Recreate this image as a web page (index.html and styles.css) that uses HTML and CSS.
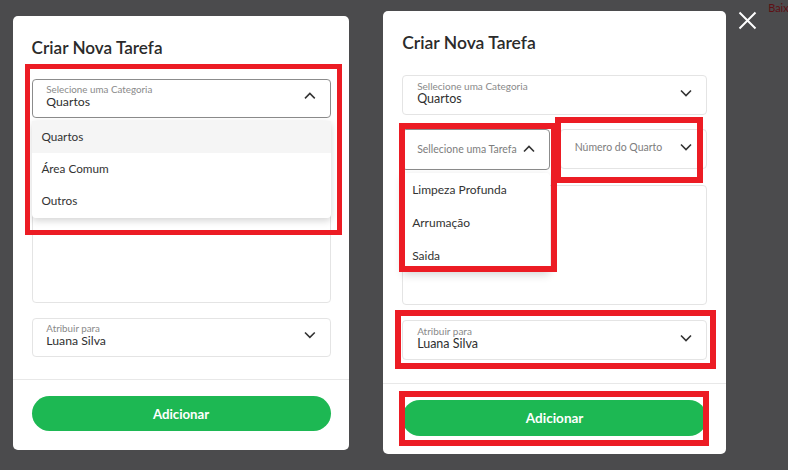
FILE: index.html
```html
<!DOCTYPE html>
<html>
<head>
<meta charset="utf-8">
<link rel="stylesheet" href="styles.css">
</head>
<body>
<div class="canvas">

  <section class="modal modal-small">
    <h2 class="modal-title">Criar Nova Tarefa</h2>
    <div class="form">
      <div class="field">
        <div class="select is-focused">
          <div class="select-text">
            <span class="select-label">Selecione uma Categoria</span>
            <span class="select-value">Quartos</span>
          </div>
          <svg class="chevron" viewBox="0 0 12 8"><path d="M1 6.5l5-5 5 5"/></svg>
        </div>
        <ul class="menu">
          <li class="menu-item is-hover">Quartos</li>
          <li class="menu-item">Área Comum</li>
          <li class="menu-item">Outros</li>
        </ul>
      </div>
      <div class="row">
        <div class="select">
          <span class="select-placeholder">Selecione uma Tarefa</span>
          <svg class="chevron" viewBox="0 0 12 8"><path d="M1 1.5l5 5 5-5"/></svg>
        </div>
        <div class="select">
          <span class="select-placeholder">Número do Quarto</span>
          <svg class="chevron" viewBox="0 0 12 8"><path d="M1 1.5l5 5 5-5"/></svg>
        </div>
      </div>
      <div class="textarea"></div>
      <div class="select">
        <div class="select-text">
          <span class="select-label">Atribuir para</span>
          <span class="select-value">Luana Silva</span>
        </div>
        <svg class="chevron" viewBox="0 0 12 8"><path d="M1 1.5l5 5 5-5"/></svg>
      </div>
    </div>
    <div class="modal-footer">
      <button class="btn">Adicionar</button>
    </div>
    <div class="mark mark-category"></div>
  </section>

  <section class="modal">
    <h2 class="modal-title">Criar Nova Tarefa</h2>
    <div class="form">
      <div class="select">
        <div class="select-text">
          <span class="select-label">Sellecione uma Categoria</span>
          <span class="select-value">Quartos</span>
        </div>
        <svg class="chevron" viewBox="0 0 12 8"><path d="M1 1.5l5 5 5-5"/></svg>
      </div>
      <div class="row">
        <div class="field">
          <div class="select select-small is-focused">
            <span class="select-placeholder">Sellecione uma Tarefa</span>
            <svg class="chevron" viewBox="0 0 12 8"><path d="M1 6.5l5-5 5 5"/></svg>
          </div>
          <ul class="menu">
            <li class="menu-item">Limpeza Profunda</li>
            <li class="menu-item">Arrumação</li>
            <li class="menu-item">Saida</li>
          </ul>
        </div>
        <div class="select">
          <span class="select-placeholder">Número do Quarto</span>
          <svg class="chevron" viewBox="0 0 12 8"><path d="M1 1.5l5 5 5-5"/></svg>
        </div>
      </div>
      <div class="textarea"></div>
      <div class="select">
        <div class="select-text">
          <span class="select-label">Atribuir para</span>
          <span class="select-value">Luana Silva</span>
        </div>
        <svg class="chevron" viewBox="0 0 12 8"><path d="M1 1.5l5 5 5-5"/></svg>
      </div>
    </div>
    <div class="modal-footer">
      <button class="btn">Adicionar</button>
    </div>
    <div class="mark mark-task"></div>
    <div class="mark mark-room"></div>
    <div class="mark mark-assign"></div>
    <div class="mark mark-button"></div>
  </section>

  <svg class="close" viewBox="0 0 19 19"><path d="M1.5 1.5l16 16M17.5 1.5l-16 16"/></svg>
  <span class="corner-link">Baixar</span>

</div>
</body>
</html>
```

FILE: styles.css
```css
body{
margin:0;
background:#4b4b4d;
font-family:Lato, "Noto Sans", sans-serif;
color:#333;
}
.canvas{
display:flex;
align-items:flex-start;
width:788px;
height:470px;
padding-left:13px;
box-sizing:border-box;
overflow:hidden;
}
.modal{
position:relative;
flex:none;
width:343px;
height:443px;
margin-top:11px;
margin-left:34px;
background:#fff;
border-radius:5px;
display:flex;
flex-direction:column;
}
.modal-small{
zoom:0.98;
margin-top:16.3px;
margin-left:0;
}
.modal-title{
margin:22px 19px 22px;
font-size:17.5px;
line-height:20px;
font-weight:600;
color:#2b2b2b;
}
.form{
display:flex;
flex-direction:column;
gap:15px;
padding:0 19px;
}
.field{
position:relative;
}
.row{
display:grid;
grid-template-columns:1fr 1fr;
gap:10px;
margin-top:-1px;
}
.select{
height:40px;
box-sizing:border-box;
border:1px solid #e4e4e4;
border-radius:4px;
display:flex;
align-items:center;
justify-content:space-between;
padding:0 14px 4px 14px;
}
.select.is-focused{
border-color:#8c8c8c;
}
.select-small{
height:41px;
padding-bottom:1px;
}
.select-text{
display:flex;
flex-direction:column;
}
.select-label{
font-size:10px;
line-height:12px;
color:#8a8a8a;
}
.select-value{
font-size:12.5px;
line-height:14px;
color:#2f2f2f;
}
.select-placeholder{
font-size:10.5px;
color:#7d7d7d;
white-space:nowrap;
}
.chevron{
width:12px;
height:8px;
flex:none;
fill:none;
stroke:#333;
stroke-width:1.6;
}
.menu{
position:absolute;
top:calc(100% + 3px);
left:0;
right:0;
margin:0;
padding:0;
list-style:none;
background:#fff;
border-radius:4px;
box-shadow:0 3px 8px rgba(0,0,0,0.16);
z-index:2;
}
.menu-item{
height:33px;
line-height:33px;
padding-left:10px;
font-size:12px;
color:#333;
}
.menu-item.is-hover{
background:#f5f5f5;
}
.textarea{
height:120px;
border:1px solid #e4e4e4;
border-radius:4px;
box-sizing:border-box;
}
.modal-footer{
margin-top:23px;
border-top:1px solid #e8e8e8;
padding:16px 19px 0;
}
.btn{
display:block;
width:100%;
height:36px;
border:0;
border-radius:18px;
background:#1db853;
color:#fff;
font-family:inherit;
font-size:13.5px;
font-weight:700;
}
.mark{
position:absolute;
border:6px solid #ec1c24;
box-sizing:border-box;
z-index:3;
}
.mark-category{
left:12px;
top:49px;
width:324px;
height:174px;
}
.mark-task{
left:16px;
top:112px;
width:158px;
height:149px;
}
.mark-room{
left:172px;
top:106px;
width:148px;
height:66px;
}
.mark-assign{
left:12px;
top:299px;
width:321px;
height:59px;
}
.mark-button{
left:16px;
top:380px;
width:310px;
height:55px;
}
.close{
flex:none;
width:19px;
height:19px;
margin:11px 0 0 12px;
fill:none;
stroke:#fff;
stroke-width:2;
}
.corner-link{
flex:none;
margin:1px 0 0 11px;
font-size:11px;
color:#5e1014;
}
```
